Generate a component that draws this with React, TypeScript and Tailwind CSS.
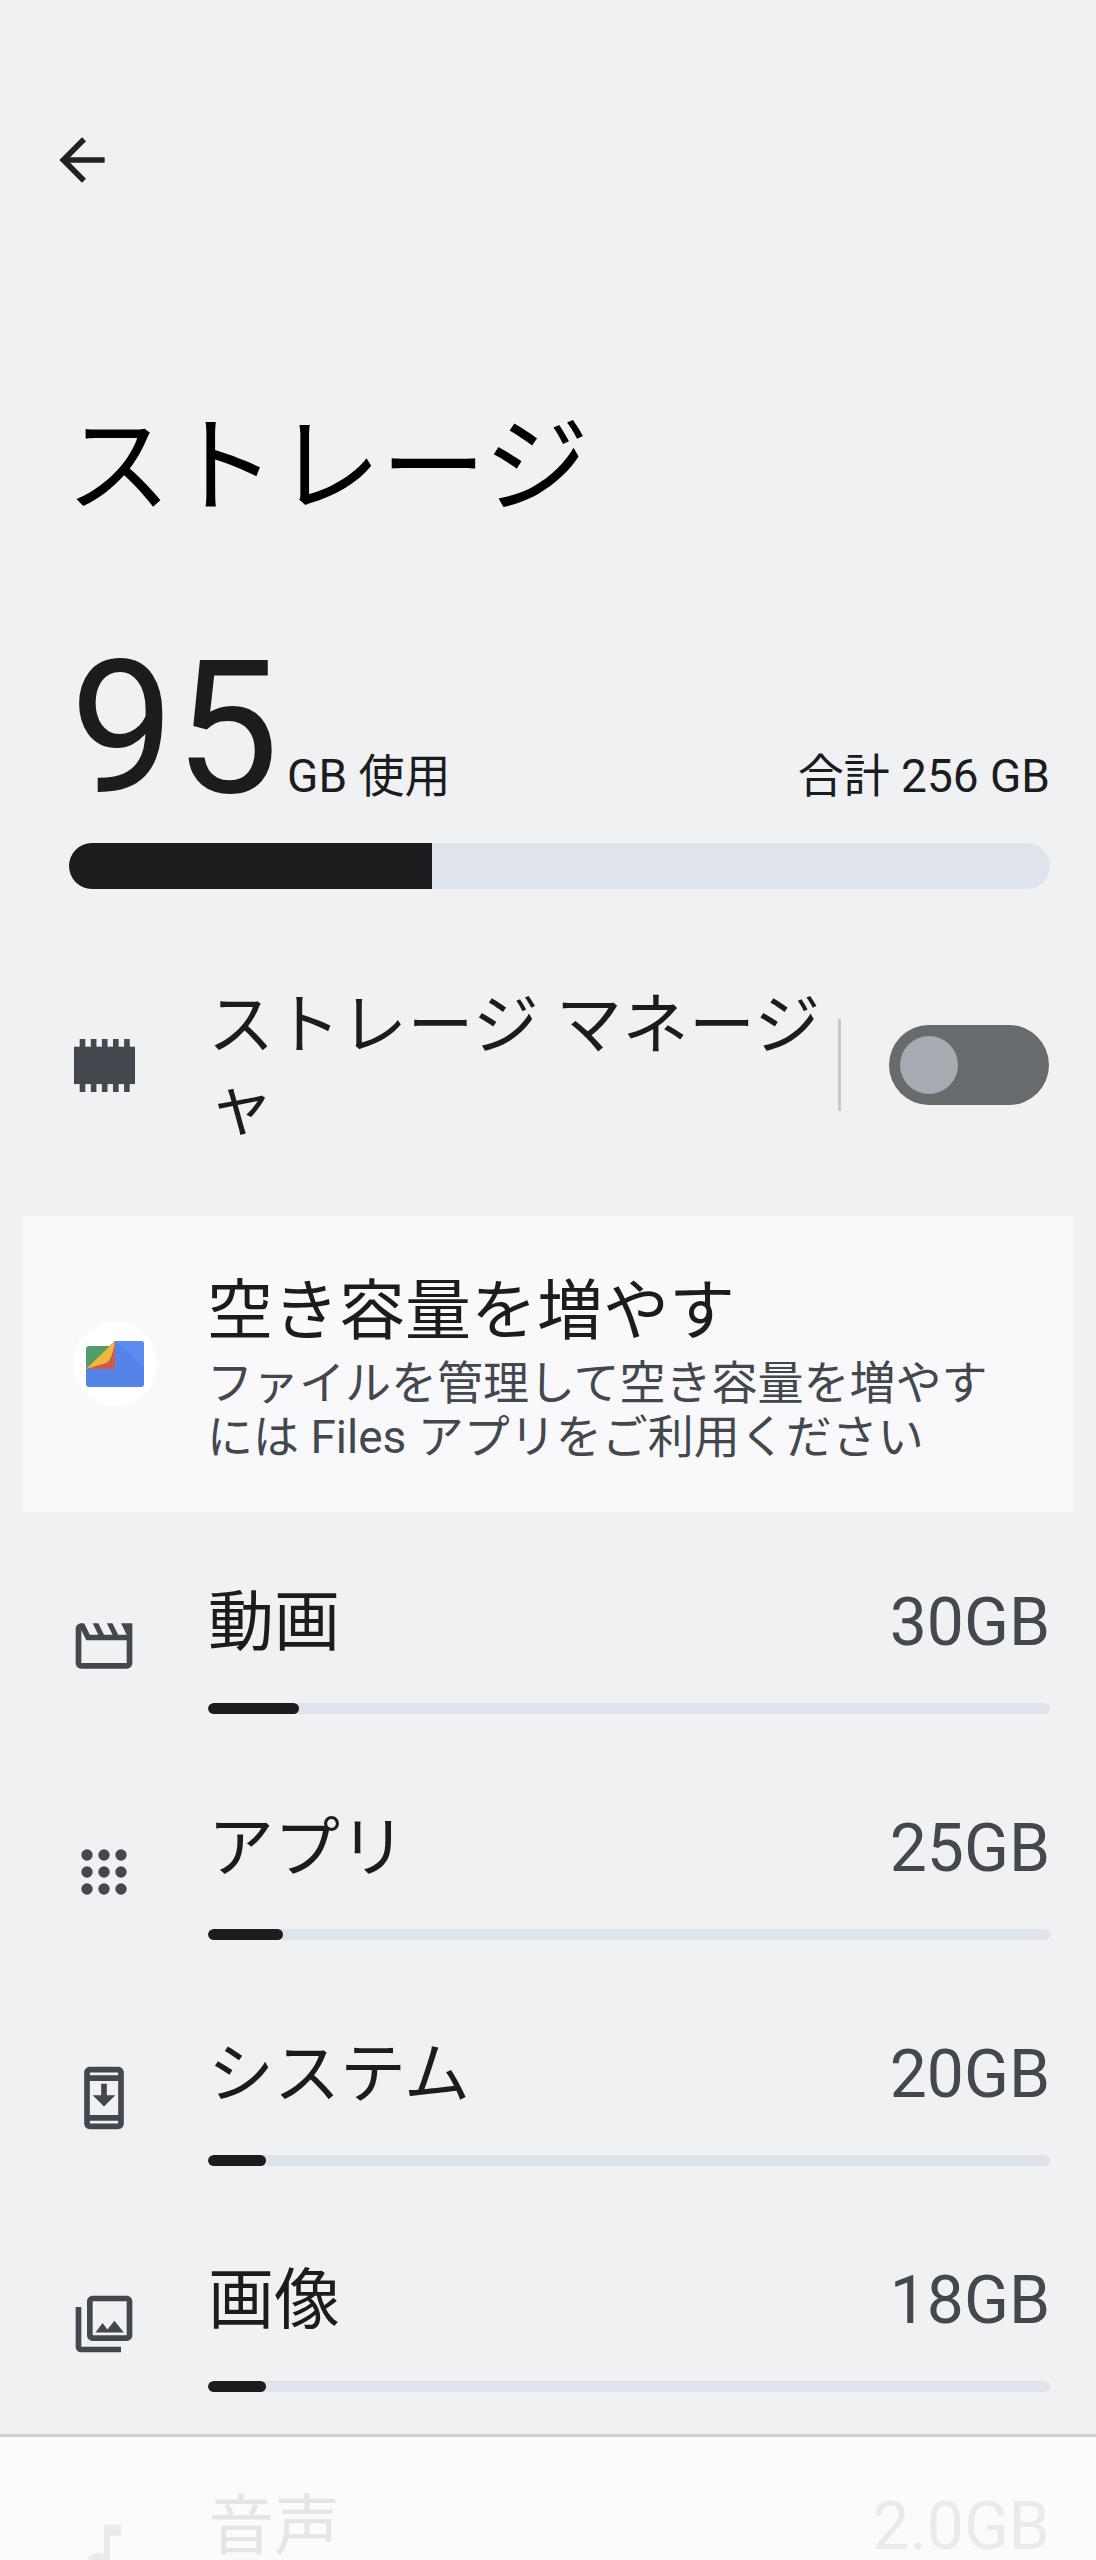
const sans = "font-['Roboto','Noto_Sans_CJK_JP',sans-serif]";

const ROWS = [
  { label: "動画", size: "30GB", fill: "w-[91px]", icon: "M4 6.47L5.76 10H20v8H4V6.47M22 4h-4l2 4h-3l-2-4h-2l2 4h-3l-2-4H8l2 4H7L5 4H4c-1.1 0-1.99.9-1.99 2L2 18c0 1.1.9 2 2 2h16c1.1 0 2-.9 2-2V4z" },
  { label: "アプリ", size: "25GB", fill: "w-[75px]", icon: "apps" },
  { label: "システム", size: "20GB", fill: "w-[58px]", icon: "M17 1.01L7 1c-1.1 0-2 .9-2 2v18c0 1.1.9 2 2 2h10c1.1 0 2-.9 2-2V3c0-1.1-.9-1.99-2-1.99zM17 21H7v-1h10v1zm0-3H7V6h10v12zM7 4V3h10v1H7zm9 7h-3V7h-2v4H8l4 4 4-4z" },
  { label: "画像", size: "18GB", fill: "w-[58px]", icon: "M20 4v12H8V4h12m0-2H8c-1.1 0-2 .9-2 2v12c0 1.1.9 2 2 2h12c1.1 0 2-.9 2-2V4c0-1.1-.9-2-2-2zm-8.5 9.67l1.69 2.26 2.48-3.1L19 15H9zM2 6v14c0 1.1.9 2 2 2h14v-2H4V6H2z" },
  { label: "音声", size: "2.0GB", fill: "w-[8px]", icon: "M12 3l.01 10.55c-.59-.34-1.27-.55-2-.55C7.79 13 6 14.79 6 17s1.79 4 4.01 4S14 19.21 14 17V7h4V3h-6z" },
];

function Icon({ d }: { d: string }) {
  return (
    <svg viewBox="0 0 24 24" className="h-[68px] w-[68px] fill-[#43474e]">
      {d === "apps" ? (
        [6, 12, 18].map((y) =>
          [6, 12, 18].map((x) => <circle key={`${x}-${y}`} cx={x} cy={y} r="2" />)
        )
      ) : (
        <path d={d} />
      )}
    </svg>
  );
}

function ChipIcon() {
  return (
    <svg viewBox="0 0 61 53" className="h-[53px] w-[61px] fill-[#43474e]">
      <rect y="7.7" width="61" height="37.4" />
      {[5.7, 16.8, 27.9, 39, 50.1].map((x) => (
        <g key={x}>
          <rect x={x} y="0" width="5.6" height="8" />
          <rect x={x} y="45" width="5.6" height="8" />
        </g>
      ))}
    </svg>
  );
}

function FilesLogo() {
  return (
    <svg viewBox="0 0 58 46" className="h-[46px] w-[58px]">
      <path d="M29 0h26a3 3 0 0 1 3 3v40a3 3 0 0 1-3 3H3a3 3 0 0 1-3-3V28z" fill="#5584e8" />
      <path d="M29 0h26a3 3 0 0 1 3 3v23z" fill="#5b8cf0" />
      <path d="M3 5h26v23H0V8a3 3 0 0 1 3-3z" fill="#4f9d69" />
      <path d="M29 0v25a3 3 0 0 1-3 3H0z" fill="#cf5a45" />
      <path d="M29 0c-1 8-3 14-5 18-1 2-2 3-4 4L0 28z" fill="#ecb63f" />
    </svg>
  );
}

export default function App() {
  return (
    <div className={`relative h-[2560px] overflow-hidden bg-[#f0f1f3] ${sans} text-[#1a1c1e]`}>
      <div className="pl-[48px] pt-[126px]">
        <svg viewBox="0 0 24 24" className="h-[68px] w-[68px] fill-[#1f2123]">
          <path d="M20 11H7.83l5.59-5.59L12 4l-8 8 8 8 1.41-1.41L7.83 13H20v-2z" />
        </svg>
      </div>

      <h1 className="mt-[209px] pl-[66px] text-[105px] leading-[130px] font-normal text-black">ストレージ</h1>

      <div className="mt-[120px] flex items-baseline justify-between pl-[70px] pr-[46px] leading-none">
        <div className="flex items-baseline">
          <span className="text-[186px] leading-[150px] font-normal">95</span>
          <span className="ml-[8px] text-[46px]">GB 使用</span>
        </div>
        <span className="text-[46px]">合計 256 GB</span>
      </div>

      <div className="ml-[69px] mr-[46px] mt-[40px] h-[46px] overflow-hidden rounded-full bg-[#dfe3eb]">
        <div className="h-full w-[363px] bg-[#1a1c1e]" />
      </div>

      <div className="mt-[94px] flex items-center pr-[46px]">
        <div className="flex w-[208px] justify-center">
          <ChipIcon />
        </div>
        <div className="w-[630px] pt-[2px] text-[66px] leading-[81px] tracking-[0.5px]">ストレージ マネージャ</div>
        <div className="h-[92px] w-[3px] bg-[#c8c9cb]" />
        <div className="ml-[48px] flex h-[80px] w-[160px] items-center rounded-full bg-[#676b6e] px-[11px]">
          <div className="h-[58px] w-[58px] rounded-full bg-[#a7abb1]" />
        </div>
      </div>

      <div className="mx-[23px] mt-[69px] flex h-[296px] items-center rounded-[4px] bg-[#f9f9fb]">
        <div className="ml-[50px] flex h-[84px] w-[84px] shrink-0 items-center justify-center rounded-full bg-white">
          <FilesLogo />
        </div>
        <div className="ml-[50px] pt-[8px]">
          <div className="text-[66px] leading-[80px]">空き容量を増やす</div>
          <p className="mt-[4px] text-[46px] leading-[54px] text-[#43474e]">
            ファイルを管理して空き容量を増やす<br />には Files アプリをご利用ください
          </p>
        </div>
      </div>

      <div className="mt-[46px] flex flex-col gap-[68px] pr-[46px]">
        {ROWS.map((r) => (
          <div key={r.label} className="flex h-[158px] items-start">
            <div className="flex w-[208px] justify-center pt-[54px]">
              <Icon d={r.icon} />
            </div>
            <div className="flex-1 pt-[20px]">
              <div className="flex items-center justify-between">
                <span className="text-[66px] leading-[90px]">{r.label}</span>
                <span className="text-[66px] leading-[90px] text-[#43474e]">{r.size}</span>
              </div>
              <div className="mt-[35px] h-[11px] overflow-hidden rounded-full bg-[#dfe3eb]">
                <div className={`h-full rounded-full bg-[#1a1c1e] ${r.fill}`} />
              </div>
            </div>
          </div>
        ))}
      </div>

      <div className="absolute inset-x-0 bottom-0 h-[126px] border-t-[3px] border-[#d0d0d2] bg-[#fcfcfc]/90" />
    </div>
  );
}
